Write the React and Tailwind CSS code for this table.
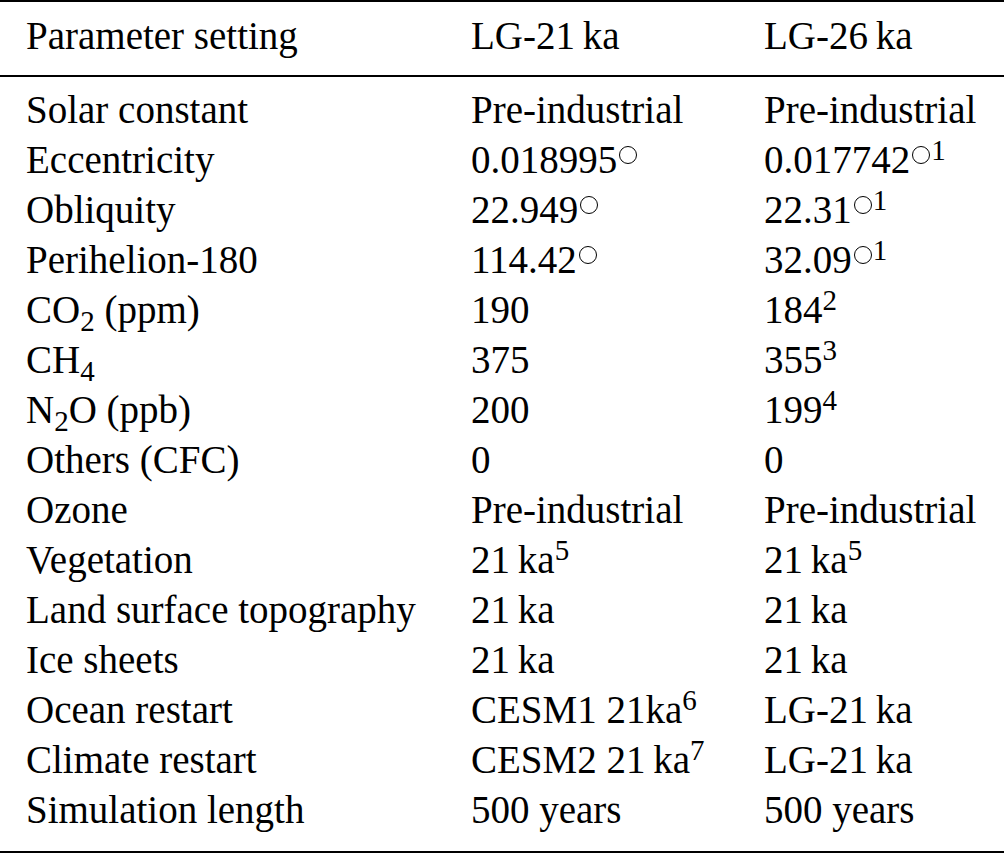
import React from "react";

// small helpers for the LaTeX-ish bits
const Sup = ({ children }) => (
  <span className="text-[29px] leading-[0] align-[13px]">{children}</span>
);
const Sub = ({ children }) => (
  <span className="text-[29px] leading-[0] align-[-8px]">{children}</span>
);
const Deg = () => (
  <span className="inline-block w-[18px] h-[18px] ml-[2px] mr-[1px] rounded-full border-[1.5px] border-black align-[9px]"></span>
);
const T = "\u2009"; // thin space

const rows = [
  ["Solar constant", "Pre-industrial", "Pre-industrial"],
  ["Eccentricity", <>0.018995<Deg /></>, <>0.017742<Deg /><Sup>1</Sup></>],
  ["Obliquity", <>22.949<Deg /></>, <>22.31<Deg /><Sup>1</Sup></>],
  ["Perihelion-180", <>114.42<Deg /></>, <>32.09<Deg /><Sup>1</Sup></>],
  [<>CO<Sub>2</Sub> (ppm)</>, "190", <>184<Sup>2</Sup></>],
  [<>CH<Sub>4</Sub></>, "375", <>355<Sup>3</Sup></>],
  [<>N<Sub>2</Sub>O (ppb)</>, "200", <>199<Sup>4</Sup></>],
  ["Others (CFC)", "0", "0"],
  ["Ozone", "Pre-industrial", "Pre-industrial"],
  ["Vegetation", <>21{T}ka<Sup>5</Sup></>, <>21{T}ka<Sup>5</Sup></>],
  ["Land surface topography", `21${T}ka`, `21${T}ka`],
  ["Ice sheets", `21${T}ka`, `21${T}ka`],
  ["Ocean restart", <>CESM1 21ka<Sup>6</Sup></>, `LG-21${T}ka`],
  ["Climate restart", <>CESM2 21{T}ka<Sup>7</Sup></>, `LG-21${T}ka`],
  ["Simulation length", "500 years", "500 years"],
];

const App = () => {
  return (
    <div className="w-[1004px] h-[853px] bg-white text-black font-['Liberation_Serif','Times_New_Roman',serif] text-[39px] leading-[50px]">
      {/* header */}
      <div className="border-t-2 border-b-2 border-black pt-[9px] pb-[14px] pl-[26px] grid grid-cols-[445px_293px_1fr]">
        <div>Parameter setting</div>
        <div>LG-21{T}ka</div>
        <div>LG-26{T}ka</div>
      </div>

      {/* body */}
      <div className="border-b-2 border-black pt-[8px] pb-[16px] pl-[26px]">
        {rows.map((r, i) => (
          <div key={i} className="grid grid-cols-[445px_293px_1fr] whitespace-nowrap">
            <div>{r[0]}</div>
            <div>{r[1]}</div>
            <div>{r[2]}</div>
          </div>
        ))}
      </div>
    </div>
  );
};

export default App;
